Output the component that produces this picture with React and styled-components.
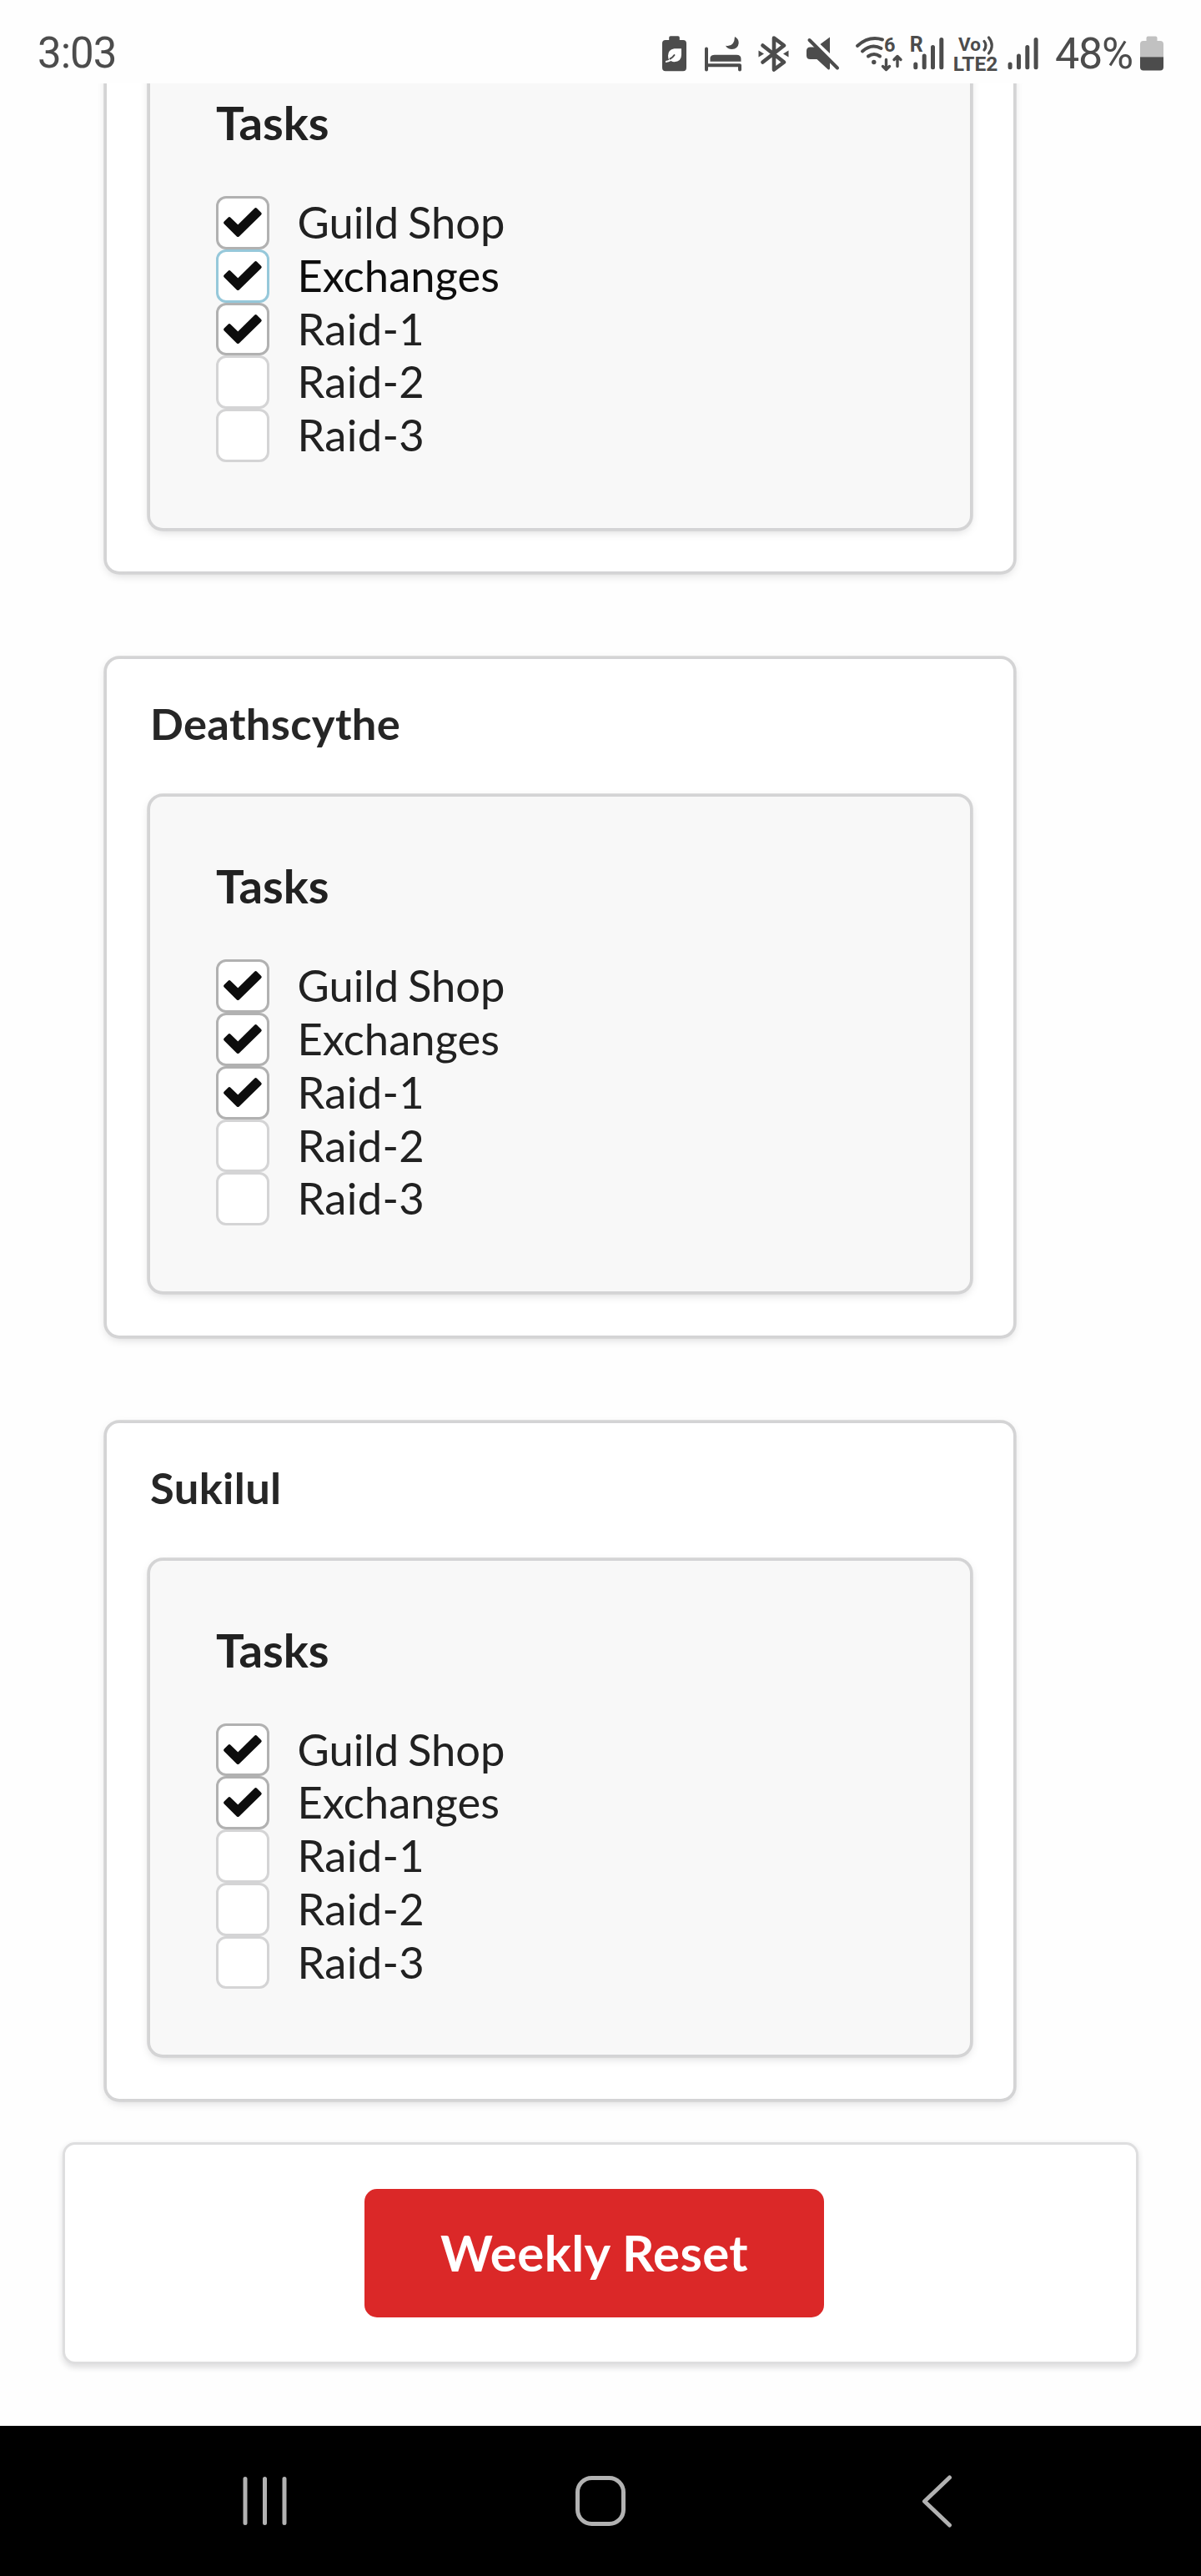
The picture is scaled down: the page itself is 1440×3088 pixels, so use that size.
import React, { useState } from "react";
import styled, { createGlobalStyle } from "styled-components";

const GlobalStyle = createGlobalStyle`
  *, *::before, *::after { box-sizing: border-box; }
  body {
    margin: 0;
    background: #fefefe;
    font-family: Lato, "Liberation Sans", sans-serif;
    color: #212121;
  }
`;

const Screen = styled.div`
  width: 1440px;
  height: 3088px;
  display: flex;
  flex-direction: column;
  overflow: hidden;
`;

const StatusBar = styled.header`
  flex: none;
  height: 100px;
  padding: 28px 45px 0 45px;
  display: flex;
  align-items: flex-start;
  justify-content: space-between;
  color: #4c4c4c;
  font-family: Roboto, sans-serif;
`;

const Clock = styled.div`
  height: 72px;
  line-height: 72px;
  font-size: 51px;
  letter-spacing: -1px;
`;

const StatusIcons = styled.div`
  display: flex;
  align-items: flex-start;
  padding-top: 14px;
`;

const Glyph = styled.svg`
  display: block;
  flex: none;
  width: ${(p) => p.$w}px;
  height: 44px;
  margin-left: ${(p) => p.$gap || 0}px;
  overflow: visible;
  fill: #4c4c4c;
`;

const Percent = styled.div`
  width: 92px;
  margin-left: 20px;
  height: 44px;
  line-height: 45px;
  font-size: 52px;
  letter-spacing: -1.2px;
  white-space: nowrap;
`;

const Viewport = styled.main`
  flex: none;
  height: 2808px;
  overflow: hidden;
  display: flex;
  flex-direction: column;
  align-items: flex-start;
`;

const ring = "0 3.75px 11.25px 0 #d4d4d5, 0 0 0 3.75px #d4d4d5";

const Card = styled.section`
  flex: none;
  width: 1087px;
  margin: ${(p) => (p.$continued ? "-40px" : "105px")} 0 0 128px;
  padding: 0 52px 52.5px;
  background: #fff;
  border-radius: ${(p) => (p.$continued ? "0 0 15px 15px" : "15px")};
  box-shadow: ${ring};
`;

const CardTitle = styled.h2`
  margin: 0;
  height: 165px;
  padding-top: 43px;
  font-size: 52.5px;
  line-height: 67.5px;
  font-weight: 700;
  letter-spacing: 0.35px;
  color: #262626;
`;

const Panel = styled.div`
  padding: ${(p) => (p.$continued ? "50px" : "70px")} 79px 79px;
  background: #f8f8f8;
  border-radius: ${(p) => (p.$continued ? "0 0 15px 15px" : "15px")};
  box-shadow: ${ring};
`;

const PanelTitle = styled.h3`
  margin: 0 0 53px;
  font-size: 56.25px;
  line-height: 72px;
  font-weight: 700;
`;

const TaskRow = styled.label`
  display: flex;
  align-items: flex-start;
  height: 63.75px;
  font-size: 52.5px;
  line-height: 61px;
  letter-spacing: ${(p) => (p.$numbered ? "0.35px" : "0")};
  word-spacing: -2.5px;
  color: ${(p) => (p.$focused ? "#0d0d0d" : "#212121")};
`;

const HiddenInput = styled.input`
  appearance: none;
  width: 0;
  height: 0;
  margin: 0;
`;

const Box = styled.span`
  flex: none;
  width: 64px;
  height: 63.75px;
  margin-right: 33.5px;
  border: 3px solid
    ${(p) => (p.$focused ? "#96c8da" : p.$checked ? "#b1b1b1" : "#d4d4d5")};
  border-radius: 12px;
  background: #fff;
  padding: 11px 0 0 6px;
`;

const Tick = styled.svg`
  display: block;
  width: 46px;
  height: 35px;
`;

const ResetBar = styled.section`
  flex: none;
  width: 1290px;
  height: 266px;
  margin: 52.5px 0 0 75px;
  padding: 53px 0 0 359px;
  border: 3px solid #dededf;
  border-radius: 15px;
  background: #fff;
  box-shadow: 0 3.75px 7.5px 0 rgba(34, 36, 38, 0.15);
`;

const ResetButton = styled.button`
  display: block;
  width: 551px;
  height: 154px;
  padding: 0 0 2px;
  border: 0;
  border-radius: 15px;
  background: #db2828;
  color: #fff;
  font: 700 60px/60px Lato, sans-serif;
  letter-spacing: 0.4px;
`;

const NavBar = styled.nav`
  flex: none;
  height: 180px;
  padding: 1px 287px 0;
  display: flex;
  align-items: center;
  justify-content: space-between;
  background: #000;
`;

const NavIcon = styled.svg`
  display: block;
  width: 64px;
  height: 64px;
  fill: none;
  stroke: #b2b2b2;
  stroke-width: 5;
  stroke-linecap: round;
`;

const TASKS = ["Guild Shop", "Exchanges", "Raid-1", "Raid-2", "Raid-3"];

const CHARACTERS = [
  { name: "", done: 3, focused: 1 },
  { name: "Deathscythe", done: 3 },
  { name: "Sukilul", done: 2 },
];

function Task({ label, initial, focused }) {
  const [checked, setChecked] = useState(initial);
  return (
    <TaskRow $focused={focused} $numbered={label.startsWith("Raid")}>
      <HiddenInput
        type="checkbox"
        checked={checked}
        onChange={() => setChecked(!checked)}
      />
      <Box $checked={checked} $focused={focused}>
        {checked && (
          <Tick viewBox="0 0 46 35">
            <path
              d="M2.2 18 L7 13.1 L17.3 23.1 L38.6 2.2 L43.6 7.2 L17.3 33Z"
              fill="#0d0d0d"
              stroke="#0d0d0d"
              strokeWidth="4"
              strokeLinejoin="round"
            />
          </Tick>
        )}
      </Box>
      {label}
    </TaskRow>
  );
}

function Character({ name, done, focused }) {
  const continued = !name;
  return (
    <Card $continued={continued}>
      {name && <CardTitle>{name}</CardTitle>}
      <Panel $continued={continued}>
        <PanelTitle>Tasks</PanelTitle>
        {TASKS.map((t, i) => (
          <Task key={t} label={t} initial={i < done} focused={i === focused} />
        ))}
      </Panel>
    </Card>
  );
}

function Signal({ x }) {
  return (
    <g stroke="#4c4c4c" strokeWidth="5" strokeLinecap="round">
      <path d={`M${x} 77V80.8M${x + 10.4} 67V80.8M${x + 20.7} 56.5V80.8M${x + 31} 47.5V80.8`} />
    </g>
  );
}

function Status() {
  return (
    <StatusBar>
      <Clock>3:03</Clock>
      <StatusIcons>
        <Glyph $w={29} viewBox="794 42 29 44">
          <path d="M804 43.3h9q1.8 0 1.8 1.8v3h4.2q4 0 4 4V81q0 4.300-4 4.300h-21q-4 0-4-4.300V52q0-4 4-4h4.200v-3q0-1.700 1.800-1.700z" />
          <path d="M817 58.200h-8.500q-7.500 1-7.500 8.500 0 3 1.200 5-1.800 1-4.200 1.300v2q4-.3 6.500-2 2 1.200 4 1.200 8.500-.5 8.500-8.500z" fill="#fefefe" />
          <path d="M803.500 70.500q3-1.500 5-4.500" stroke="#4c4c4c" strokeWidth="2" fill="none" strokeLinecap="round" />
        </Glyph>
        <Glyph $w={44} $gap={22} viewBox="845 42 44 44">
          <path d="M847 58.500V83.400M847 78.300H887V83.400" fill="none" stroke="#4c4c4c" strokeWidth="4" strokeLinecap="round" strokeLinejoin="round" />
          <path d="M851.500 73.700V69q1-3.300 5.500-3.300h26q5.500 0 5.500 5v3z" />
          <path d="M881 44q5 2.500 4.700 7.700-.8 6.800-8.200 7.300-5 0-7.500-4.300 10.500 2 11-10.700z" />
        </Glyph>
        <Glyph $w={37} $gap={20} viewBox="909 42 37 44">
          <path d="M914.500 54.500L940 74.500 928 83.500V45.500L940 54.500 914.500 74.500" fill="none" stroke="#4c4c4c" strokeWidth="4.600" strokeLinejoin="round" strokeLinecap="round" />
          <path d="M909.500 60.500l6.500 4-6.500 4zM945.500 60.500l-6.500 4 6.500 4z" />
        </Glyph>
        <Glyph $w={39} $gap={21} viewBox="967 42 39 44">
          <path d="M995 44.500V64L983.500 53zM971.500 56.500h6.500l17 17V82q-.5 2.500-2.500 1L979.500 71h-8q-4.500 0-4.500-4.500V61q0-4.500 4.500-4.500z" />
          <path d="M970.500 48L1004 81.500" stroke="#4c4c4c" strokeWidth="4" strokeLinecap="round" />
        </Glyph>
        <Glyph $w={57} $gap={20} viewBox="1026 42 57 44">
          <g fill="none" stroke="#4c4c4c" strokeWidth="4" strokeLinecap="round" strokeLinejoin="round">
            <path d="M1028 55Q1042 42.500 1058 47.500M1034 61.500Q1045 51.500 1056.500 58M1041 67.500Q1048 62.500 1055 67.500" />
            <path d="M1062.500 71.500V82.500M1058.500 79.500l4 4 4-4M1076 79.500V68.500M1072 71.500l4-4 4 4" strokeWidth="3.400" />
          </g>
          <circle cx="1047.800" cy="74.500" r="2.700" />
          <text x="1060" y="61.500" fontFamily="Roboto, sans-serif" fontWeight="700" fontSize="23.500">6</text>
        </Glyph>
        <Glyph $w={39} $gap={9} viewBox="1092 42 39 44">
          <text x="1090.800" y="61.800" fontFamily="Roboto, sans-serif" fontWeight="700" fontSize="25">R</text>
          <Signal x={1097.8} />
        </Glyph>
        <Glyph $w={52} $gap={13} viewBox="1144 42 52 44">
          <g fontFamily="Roboto, sans-serif" fontWeight="700">
            <text x="1149" y="61" fontSize="22.500" textLength="27">Vo</text>
            <text x="1142.800" y="84.500" fontSize="24.500" textLength="53.500">LTE2</text>
          </g>
          <path d="M1180 49.500q4 4.500 0 10.500M1185.500 45q7.500 9.500 0 19" fill="none" stroke="#4c4c4c" strokeWidth="3.200" strokeLinecap="round" />
        </Glyph>
        <Glyph $w={36} $gap={13} viewBox="1209 42 36 44">
          <Signal x={1211.1} />
        </Glyph>
        <Percent>48%</Percent>
        <Glyph $w={28} $gap={10} viewBox="1367 42 28 44">
          <path d="M1367 68V53q0-4 4-4h3.500v-3.500q0-2 2-2h9q2 0 2 2V49h3.500q4 0 4 4v15z" fill="#c1c1c1" />
          <path d="M1367 68.300h28V80.500q0 4-4 4h-20q-4 0-4-4z" />
        </Glyph>
      </StatusIcons>
    </StatusBar>
  );
}

export default function App() {
  return (
    <Screen>
      <GlobalStyle />
      <Status />
      <Viewport>
        {CHARACTERS.map((c) => (
          <Character key={c.name} {...c} />
        ))}
        <ResetBar>
          <ResetButton type="button">Weekly Reset</ResetButton>
        </ResetBar>
      </Viewport>
      <NavBar>
        <NavIcon viewBox="0 0 64 64">
          <path d="M7 4.500V57.500M30.500 4.500V57.500M54 4.500V57.500" />
        </NavIcon>
        <NavIcon viewBox="0 0 64 64">
          <rect x="4.500" y="3.500" width="55" height="55" rx="17" />
        </NavIcon>
        <NavIcon viewBox="0 0 64 64">
          <path d="M49.500 3L19.500 31.500L49.500 60" strokeLinejoin="round" />
        </NavIcon>
      </NavBar>
    </Screen>
  );
}
